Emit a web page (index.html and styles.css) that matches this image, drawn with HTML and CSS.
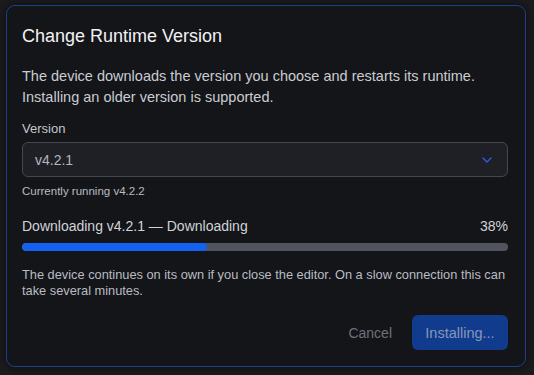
FILE: index.html
```html
<!DOCTYPE html>
<html lang="en">
<head>
  <meta charset="UTF-8" />
  <meta name="viewport" content="width=device-width, initial-scale=1.0"/>
  <title>Change Runtime Version</title>
  <link rel="stylesheet" href="styles.css">
</head>
<body>

  <div class="dialog">
    <h2 class="title">Change Runtime Version</h2>

    <p class="intro">The device downloads the version you choose and restarts its runtime. Installing an older version is supported.</p>

    <label class="label" for="version">Version</label>
    <div class="select">
      <span class="select-value">v4.2.1</span>
      <svg class="chevron" width="10" height="6" viewBox="0 0 10 6">
        <path d="M1 1l4 4 4-4" fill="none" stroke="#2563eb" stroke-width="1.3" stroke-linecap="round" stroke-linejoin="round"/>
      </svg>
    </div>
    <div class="hint">Currently running v4.2.2</div>

    <div class="progress-head">
      <span>Downloading v4.2.1 — Downloading</span>
      <span>38%</span>
    </div>
    <div class="track">
      <div class="fill" style="width: 38%"></div>
    </div>

    <p class="note">The device continues on its own if you close the editor. On a slow connection this can take several minutes.</p>

    <div class="actions">
      <button class="btn-cancel">Cancel</button>
      <button class="btn-primary" disabled>Installing...</button>
    </div>
  </div>

</body>
</html>
```

FILE: styles.css
```css
* {
  box-sizing: border-box;
}

body {
  margin: 0;
  padding: 5px 8px 8px 6px;
  background: #1c1c1e;
  font-family: 'Liberation Sans', Arial, sans-serif;
  color: #c9ccd3;
}

.dialog {
  width: 520px;
  height: 362px;
  background: #141518;
  border: 1px solid #1d3f8f;
  border-radius: 9px;
  padding: 19px 17px 16px 15px;
  box-shadow: 0 0 12px rgba(0, 0, 0, 0.6);
  display: flex;
  flex-direction: column;
}

.title {
  margin: 0;
  font-size: 18px;
  line-height: 22px;
  font-weight: 400;
  color: #f2f2f4;
}

.intro {
  margin: 19px 0 0;
  font-size: 14.5px;
  line-height: 21px;
}

.label {
  margin-top: 13px;
  font-size: 13px;
  line-height: 16px;
  color: #c4c7ce;
}

.select {
  margin-top: 5px;
  height: 35px;
  background: #1f2026;
  border: 1px solid #45474f;
  border-radius: 6px;
  padding: 0 15px 0 12px;
  display: flex;
  align-items: center;
  justify-content: space-between;
}

.select-value {
  font-size: 14px;
  color: #b3b5bb;
}

.hint {
  margin-top: 6px;
  font-size: 11.5px;
  line-height: 16px;
  color: #b8bbc2;
}

.progress-head {
  margin-top: 18px;
  display: flex;
  justify-content: space-between;
  font-size: 14px;
  line-height: 18px;
  color: #d0d3d9;
}

.track {
  margin-top: 8px;
  height: 8px;
  background: #51545f;
  border-radius: 4px;
  overflow: hidden;
}

.fill {
  height: 100%;
  background: #1460ef;
  border-radius: 4px;
}

.note {
  margin: 16px 0 0;
  font-size: 12.8px;
  line-height: 16px;
  color: #b9bcc3;
}

.actions {
  margin-top: auto;
  display: flex;
  justify-content: flex-end;
  align-items: center;
  gap: 20px;
}

.btn-cancel {
  background: none;
  border: none;
  font-family: inherit;
  font-size: 14px;
  color: #6f7178;
  padding: 0;
}

.btn-primary {
  background: #113b8c;
  border: none;
  border-radius: 6px;
  font-family: inherit;
  font-size: 14.5px;
  color: #8797bd;
  width: 96px;
  height: 35px;
  padding: 0;
}
```
